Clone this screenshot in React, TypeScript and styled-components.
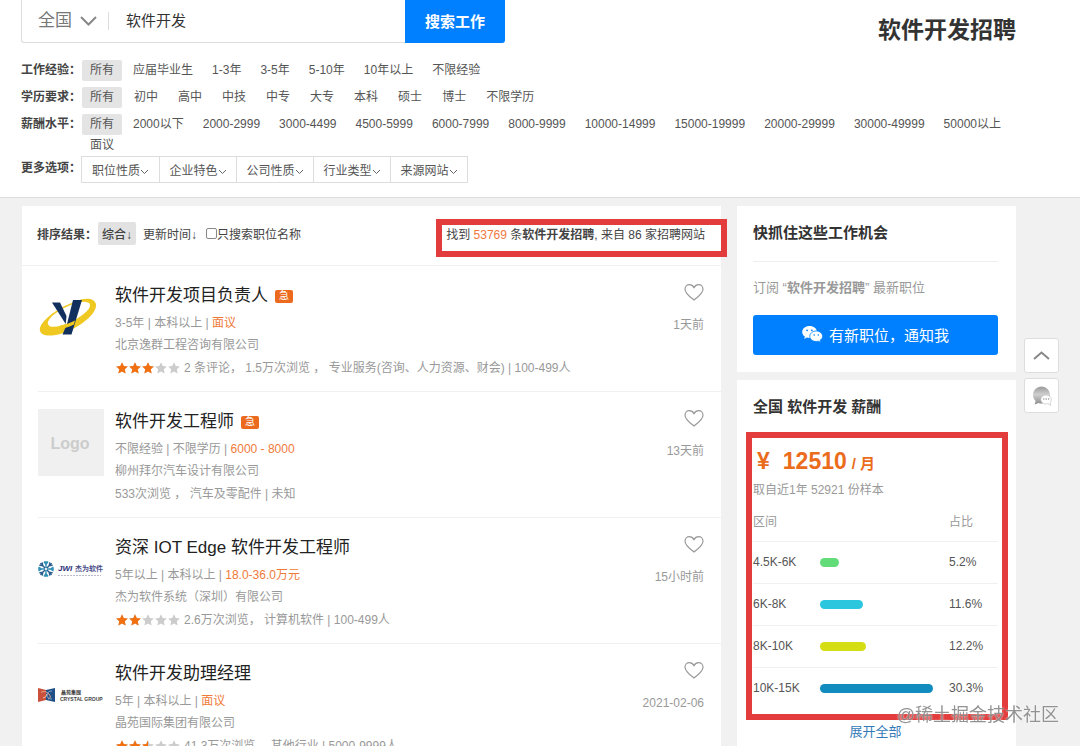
import React from "react";
import styled, { createGlobalStyle } from "styled-components";

const GlobalStyle = createGlobalStyle`
  * { box-sizing: border-box; }
  html, body { margin: 0; background: #f1f1f1; }
  body, button, input, select {
    font-family: "Liberation Sans", "Noto Sans CJK SC", sans-serif;
  }
  body { font-size: 12px; color: #444; }
  h1, h2, h3, p, ul { margin: 0; padding: 0; }
  ul { list-style: none; }
  a { color: inherit; text-decoration: none; }
  button { border: 0; padding: 0; cursor: pointer; }
`;

const Page = styled.div`
  height: 100vh;
  overflow: hidden auto;
  scrollbar-width: none;
`;

const Header = styled.header`
  background: #fff;
  border-bottom: 1px solid #dcdcdc;
  padding: 0 64px 14px 21px;
`;

const TopBar = styled.div`
  display: flex;
  justify-content: space-between;
  align-items: flex-start;
  height: 60px;
`;

const SearchForm = styled.form`
  display: flex;
  width: 484px;
  height: 43px;
  border: 1px solid #ddd;
  border-width: 0 0 1px 1px;
  border-radius: 0 0 3px 3px;
`;

const CityPicker = styled.label`
  position: relative;
  display: flex;
  align-items: center;
  width: 87px;
  padding-left: 16px;
  padding-bottom: 1px;

  &::after {
    content: "";
    position: absolute;
    right: 0;
    top: 12px;
    height: 18px;
    border-right: 1px solid #ddd;
  }
  svg { position: absolute; left: 58px; top: 16px; pointer-events: none; }
`;

const CitySelect = styled.select`
  appearance: none;
  border: 0;
  padding: 0;
  background: none;
  width: 64px;
  height: 40px;
  font-size: 17px;
  color: #777;
`;

const SearchInput = styled.input`
  flex: 1;
  min-width: 0;
  border: 0;
  background: none;
  padding: 0 0 3px 17px;
  font-size: 15px;
  color: #333;
  outline: none;
`;

const SearchButton = styled.button`
  width: 100px;
  height: 43px;
  padding-bottom: 3px;
  background: #0080ff;
  border-radius: 0 0 3px 0;
  color: #fff;
  font-size: 15px;
  font-weight: 700;
`;

const PageTitle = styled.h1`
  padding-top: 13px;
  font-size: 23px;
  line-height: 34px;
  color: #333;
`;

const FilterRow = styled.div<{ $gap: number }>`
  display: flex;
  margin-bottom: ${(p) => p.$gap}px;
`;

const FilterLabel = styled.span<{ $tall?: boolean }>`
  flex: none;
  width: 61px;
  font-weight: 700;
  line-height: ${(p) => (p.$tall ? 25 : 21)}px;
  color: #444;
`;

const Options = styled.ul<{ $gap: number }>`
  display: flex;
  flex-wrap: wrap;
  column-gap: ${(p) => p.$gap}px;
`;

const Option = styled.a<{ $on?: boolean }>`
  display: block;
  padding: 0 8px;
  line-height: 21px;
  border-radius: 2px;
  background: ${(p) => (p.$on ? "#e4e4e4" : "transparent")};
  color: #555;
`;

const MoreGroup = styled.div`
  display: flex;
  margin-left: -1px;
  border: 1px solid #ddd;
`;

const MoreButton = styled.button`
  display: flex;
  align-items: center;
  justify-content: center;
  width: 77px;
  height: 25px;
  padding-bottom: 1px;
  background: #fff;
  font-size: 12px;
  color: #555;

  & + & { border-left: 1px solid #ddd; }
  svg { margin-top: 6px; }
`;

const Body = styled.div`
  display: grid;
  grid-template-columns: minmax(0, 1fr) 279px;
  gap: 16px;
  padding: 8px 64px 0 22px;
  align-items: start;
`;

const Results = styled.main`
  background: #fff;
`;

const SortBar = styled.div`
  position: relative;
  display: flex;
  align-items: center;
  height: 60px;
  padding: 0 16px 4px 15px;
  border-bottom: 1px solid #f0f0f0;
`;

const SortLabel = styled.span`
  width: 61px;
  font-weight: 700;
`;

const SortButton = styled.button<{ $on?: boolean }>`
  height: 23px;
  padding: 0 4px;
  margin-right: 3px;
  border-radius: 2px;
  background: ${(p) => (p.$on ? "#e2e2e2" : "transparent")};
  font-size: 12px;
  font-weight: ${(p) => (p.$on ? 500 : 400)};
  color: #444;
`;

const TitleOnly = styled.label`
  display: flex;
  align-items: center;
  margin-left: 2px;

  input {
    appearance: none;
    width: 11px;
    height: 11px;
    margin: 0;
    border: 1px solid #888;
    border-radius: 2px;
    background: #fff;
  }
`;

const Summary = styled.p`
  margin-left: auto;
  em { font-style: normal; color: #f07840; }
`;

const SummaryMark = styled.div`
  position: absolute;
  inset: 13px -6px 8px auto;
  width: 291px;
  border: 6px solid #e23c3c;
  pointer-events: none;
`;

const Job = styled.article`
  display: grid;
  grid-template-columns: 77px minmax(0, 1fr) auto;
  height: 126px;
  margin-left: 16px;
  padding: 17px 17px 0 0;
  border-bottom: 1px solid #f0f0f0;
`;

const Logo = styled.div`
  width: 66px;
  height: 67px;
  svg { display: block; overflow: visible; }
`;

const JobTitle = styled.h2`
  display: flex;
  align-items: center;
  gap: 7px;
  margin-bottom: 3px;
  font-size: 17px;
  font-weight: 400;
  line-height: 26px;
  color: #222;
`;

const Urgent = styled.span`
  width: 18px;
  height: 13px;
  border-radius: 2px;
  background: #ec6a1e;
  color: #fff;
  font-size: 10px;
  line-height: 12px;
  text-align: center;
`;

const Meta = styled.p`
  display: flex;
  align-items: center;
  line-height: 22px;
  white-space: pre;
  color: #999;
  strong { font-weight: 400; color: #f07a3a; }
`;

const Stats = styled(Meta)`
  line-height: 24px;
  gap: 4px;
`;

const Side = styled.div`
  display: flex;
  flex-direction: column;
  align-items: flex-end;
  color: #999;
  line-height: 22px;
`;

const HeartButton = styled.button`
  width: 20px;
  height: 20px;
  margin-bottom: 11px;
  background: none;
  svg { display: block; }
`;

const Sidebar = styled.aside`
  display: grid;
  gap: 8px;
`;

const Card = styled.section`
  position: relative;
  background: #fff;
  padding: 0 18px 17px 16px;
`;

const CardTitle = styled.h2`
  font-size: 15px;
  line-height: 22px;
  padding: 16px 0 17px;
  color: #333;
`;

const Subscribe = styled.p`
  border-top: 1px solid #eee;
  padding: 16px 0;
  font-size: 13px;
  line-height: 20px;
  color: #999;
`;

const NotifyButton = styled.button`
  display: flex;
  align-items: center;
  justify-content: center;
  gap: 6px;
  width: 100%;
  height: 40px;
  margin-top: 1px;
  padding-bottom: 2px;
  border-radius: 3px;
  background: #0080ff;
  color: #fff;
  font-size: 15px;
`;

const Price = styled.p`
  display: flex;
  align-items: baseline;
  padding-left: 4px;
  margin-top: 10px;
  font-size: 23px;
  font-weight: 700;
  line-height: 32px;
  color: #ea6c1c;
  span { margin-right: 13px; }
  small { margin-left: 5px; font-size: 15px; }
`;

const Sample = styled.p`
  line-height: 20px;
  color: #999;
`;

const SalaryTable = styled.table`
  width: 100%;
  border-collapse: collapse;
  table-layout: fixed;
  text-align: left;
  color: #555;

  th, td {
    height: 42px;
    padding: 0;
    font-weight: 400;
  }
  thead th { height: 41px; color: #999; }
  tbody tr { border-top: 1px solid #f0f0f0; }
  td:nth-child(2) { padding-right: 16px; }
`;

const RangeCol = styled.col` width: 67px; `;
const BarCol = styled.col` width: 129px; `;

const Bar = styled.div<{ $color: string }>`
  height: 9px;
  border-radius: 5px;
  background: ${(p) => p.$color};
`;

const SalaryMark = styled.div`
  position: absolute;
  inset: 52px 8px 39px 9px;
  border: 6px solid #e23c3c;
  pointer-events: none;
`;

const ExpandLink = styled.a`
  display: block;
  padding-top: 13px;
  text-align: center;
  font-size: 13px;
  line-height: 20px;
  color: #337ab7;
`;

const FloatTools = styled.div`
  position: fixed;
  right: 21px;
  top: 338px;
  display: grid;
  gap: 5px;
`;

const ToolButton = styled.button`
  display: grid;
  place-items: center;
  width: 35px;
  height: 35px;
  border: 1px solid #ddd;
  border-radius: 3px;
  background: #fff;
`;

const Watermark = styled.div`
  position: fixed;
  right: 21px;
  bottom: 18px;
  font-size: 18px;
  line-height: 26px;
  color: rgba(120, 120, 120, 0.8);
  text-shadow: 0 0 2px #fff;
`;

function Chevron({ width, height, color, up, weight = 2 }: { width: number; height: number; color: string; up?: boolean; weight?: number }) {
  return (
    <svg width={width} height={height} viewBox={`0 0 ${width} ${height}`} fill="none" stroke={color} strokeWidth={weight} aria-hidden="true">
      <path d={up ? `M1 ${height - 1}L${width / 2} 1.5L${width - 1} ${height - 1}` : `M1 1L${width / 2} ${height - 1.5}L${width - 1} 1`} />
    </svg>
  );
}

const STAR = "M6 .3l1.75 3.75 4.1.5-3.03 2.8.8 4.05L6 9.4l-3.62 2 .8-4.05L.15 4.55l4.1-.5z";

function Stars({ id, score }: { id: string; score: number }) {
  return (
    <svg width="65" height="12" viewBox="0 0 65 12" role="img" aria-label={`${score} 星`}>
      {[0, 1, 2, 3, 4].map((i) => {
        const part = Math.max(0, Math.min(1, score - i));
        return (
          <g key={i} transform={`translate(${i * 13 + 1} 0)`}>
            <path d={STAR} fill="#ccc" />
            <clipPath id={`${id}-${i}`}>
              <rect width={12 * part} height="12" />
            </clipPath>
            <path d={STAR} fill="#f2700f" clipPath={`url(#${id}-${i})`} />
          </g>
        );
      })}
    </svg>
  );
}

function Heart() {
  return (
    <svg width="20" height="20" viewBox="0 0 20 20" fill="none" stroke="#999" strokeWidth="1.2" aria-hidden="true">
      <path d="M10 17C6.500 14.200 1 10.400 1 6.200 1 3.400 3 1.600 5.400 1.600c2 0 3.600 1.200 4.600 3 1-1.800 2.600-3 4.600-3C17 1.600 19 3.400 19 6.200c0 4.200-5.500 8-9 10.800z" />
    </svg>
  );
}

function WechatIcon() {
  return (
    <svg width="21" height="18" viewBox="0 0 21 18" aria-hidden="true">
      <path d="M7.500 1C3.400 1 .2 3.600.2 7c0 1.900 1 3.500 2.700 4.600L2.200 14l2.600-1.400c.9.300 1.800.4 2.700.4C11.600 13 15 10.400 15 7S11.600 1 7.500 1z" fill="#fff" />
      <circle cx="5.100" cy="5.300" r=".9" fill="#0080ff" />
      <circle cx="9.900" cy="5.300" r=".9" fill="#0080ff" />
      <path d="M14.200 6c-3.600 0-6.400 2.400-6.400 5.300s2.800 5.200 6.400 5.200c.7 0 1.500-.1 2.200-.3l2.200 1.300-.6-2.100c1.600-1 2.600-2.400 2.600-4.100C20.600 8.400 17.800 6 14.200 6z" fill="#fff" stroke="#0080ff" strokeWidth=".8" />
      <circle cx="12.200" cy="10" r=".8" fill="#0080ff" />
      <circle cx="16.300" cy="10" r=".8" fill="#0080ff" />
    </svg>
  );
}

function ChatIcon() {
  return (
    <svg width="20" height="20" viewBox="0 0 20 20" aria-hidden="true">
      <defs>
        <linearGradient id="chat" x1="0" y1="0" x2="0" y2="1">
          <stop offset="0" stopColor="#9a9a9a" />
          <stop offset=".45" stopColor="#cfcfcf" />
          <stop offset="1" stopColor="#8a8a8a" />
        </linearGradient>
      </defs>
      <path d="M9.500.5C4.800.5 1 4.300 1 9c0 2.400 1 4.500 2.600 6L2.700 18.500l3.800-1.600c.9.400 1.900.6 3 .6 4.700 0 8.500-3.800 8.500-8.500S14.200.5 9.500.5z" fill="url(#chat)" />
      <path d="M14 9c-3 0-5.200 1.900-5.200 4.500S11 18 14 18c.7 0 1.400-.1 2-.3l2.700 1.600-.5-2.800c.7-.8 1.100-1.800 1.100-3C19.300 10.900 17 9 14 9z" fill="#fff" stroke="#bbb" strokeWidth=".6" />
      <g fill="#999">
        <circle cx="11.800" cy="13" r=".8" />
        <circle cx="14.200" cy="13" r=".8" />
        <circle cx="16.600" cy="13" r=".8" />
      </g>
    </svg>
  );
}

function OrbitLogo() {
  return (
    <svg width="66" height="67" viewBox="0 0 66 67" aria-hidden="true">
      <path
        fillRule="evenodd"
        fill="#efc922"
        d="M36 19C47 14 57 15 58 21.500c.8 7.500-10 18-25 25.500C19 53.500 4 55 2 48 0 40 17 26 36 19zM34 21.500C20 27 9 35.500 10 41c1 4.500 11 3.500 22-1.500C43 34 53 26.500 52 21.500c-1-3.800-10-3.300-18 0z"
      />
      <path d="M14 19.500h8l6.500 13.500-.8 8z" fill="#12305e" />
      <path d="M35 17h9L33.500 51.500H24.500L29 41z" fill="#12305e" />
      <path d="M22 42.500c5-.8 10-2.500 15-5l-1 4c-5 2.500-10 4-14.500 4.500z" fill="#efc922" />
    </svg>
  );
}

function PlaceholderLogo() {
  return (
    <svg width="66" height="67" viewBox="0 0 66 67" role="img" aria-label="Logo">
      <rect width="66" height="67" fill="#f0f0f0" />
      <text x="32" y="40" textAnchor="middle" fontSize="16" fontWeight="700" fill="#ccc">Logo</text>
    </svg>
  );
}

function JwiLogo() {
  return (
    <svg width="66" height="67" viewBox="0 0 66 67" role="img" aria-label="JWI 杰为软件">
      <g transform="translate(8 34)" strokeWidth="1.400" fill="none">
        {[0, 45, 90, 135, 180, 225, 270, 315].map((a) => (
          <path key={a} transform={`rotate(${a})`} d="M0-1V-8M-2-7.500L0-4.500 2-7.500" stroke={a % 90 ? "#2b5c8c" : "#2f8fb5"} />
        ))}
      </g>
      <text x="20" y="36" fontSize="8" fontWeight="700" fontStyle="italic" fill="#2b2f7a">JWI</text>
      <text x="37" y="36" fontSize="7" fontWeight="700" fill="#4a4f8a">杰为软件</text>
      <path d="M20 40.500h43" stroke="#bbc" strokeDasharray="2 1" />
    </svg>
  );
}

function CrystalLogo() {
  return (
    <svg width="66" height="67" viewBox="0 0 66 67" role="img" aria-label="晶苑集团 CRYSTAL GROUP">
      <path d="M0 27l8 2v10l-8 2z" fill="#c9503a" />
      <path d="M8 29l9-2v14l-9-2z" fill="#1f4f86" />
      <path d="M3 31q5-2 8 2t-1 5" fill="none" stroke="#e9a48a" />
      <path d="M14 30q-5 0-5 4t5 4" fill="none" stroke="#7fa6c8" />
      <path d="M5 37q3 0 4-4" fill="none" stroke="#f0c0b0" />
      <text x="23" y="33" fontSize="5" fontWeight="700" fill="#333">晶苑集團</text>
      <text x="22" y="40" fontSize="5" fontWeight="700" fill="#444">CRYSTAL GROUP</text>
    </svg>
  );
}

const filters = [
  { label: "工作经验：", gap: 3, items: ["所有", "应届毕业生", "1-3年", "3-5年", "5-10年", "10年以上", "不限经验"] },
  { label: "学历要求：", gap: 4, items: ["所有", "初中", "高中", "中技", "中专", "大专", "本科", "硕士", "博士", "不限学历"] },
  {
    label: "薪酬水平：",
    gap: 3,
    items: ["所有", "2000以下", "2000-2999", "3000-4499", "4500-5999", "6000-7999", "8000-9999", "10000-14999", "15000-19999", "20000-29999", "30000-49999", "50000以上", "面议"],
  },
];

const moreOptions = ["职位性质", "企业特色", "公司性质", "行业类型", "来源网站"];

const jobs = [
  { id: "a", title: "软件开发项目负责人", urgent: true, need: "3-5年 | 本科以上 | ", pay: "面议", company: "北京逸群工程咨询有限公司", score: 3, stats: "2 条评论， 1.5万次浏览 ， 专业服务(咨询、人力资源、财会) | 100-499人", date: "1天前", logo: <OrbitLogo /> },
  { id: "b", title: "软件开发工程师", urgent: true, need: "不限经验 | 不限学历 | ", pay: "6000 - 8000", company: "柳州拜尔汽车设计有限公司", score: 0, stats: "533次浏览 ， 汽车及零配件 | 未知", date: "13天前", logo: <PlaceholderLogo /> },
  { id: "c", title: "资深 IOT Edge 软件开发工程师", urgent: false, need: "5年以上 | 本科以上 | ", pay: "18.0-36.0万元", company: "杰为软件系统（深圳）有限公司", score: 2, stats: "2.6万次浏览， 计算机软件 | 100-499人", date: "15小时前", logo: <JwiLogo /> },
  { id: "d", title: "软件开发助理经理", urgent: false, need: "5年 | 本科以上 | ", pay: "面议", company: "晶苑国际集团有限公司", score: 2.5, stats: "41.3万次浏览， 其他行业 | 5000-9999人", date: "2021-02-06", logo: <CrystalLogo /> },
];

const salaries = [
  { range: "4.5K-6K", share: 5.2, color: "#62dc78" },
  { range: "6K-8K", share: 11.6, color: "#2cc6de" },
  { range: "8K-10K", share: 12.2, color: "#d4de12" },
  { range: "10K-15K", share: 30.3, color: "#128cbe" },
];
const topShare = Math.max(...salaries.map((s) => s.share));

export default function App() {
  return (
    <Page>
      <GlobalStyle />
      <Header>
        <TopBar>
          <SearchForm onSubmit={(e) => e.preventDefault()}>
            <CityPicker>
              <CitySelect aria-label="城市">
                <option>全国</option>
              </CitySelect>
              <Chevron width={17} height={10} color="#888" />
            </CityPicker>
            <SearchInput aria-label="职位关键词" defaultValue="软件开发" />
            <SearchButton type="submit">搜索工作</SearchButton>
          </SearchForm>
          <PageTitle>软件开发招聘</PageTitle>
        </TopBar>
        {filters.map((row, i) => (
          <FilterRow key={row.label} $gap={i === filters.length - 1 ? 0 : 6}>
            <FilterLabel>{row.label}</FilterLabel>
            <Options $gap={row.gap}>
              {row.items.map((item, n) => (
                <li key={item}>
                  <Option href="#" $on={n === 0}>{item}</Option>
                </li>
              ))}
            </Options>
          </FilterRow>
        ))}
        <FilterRow $gap={0}>
          <FilterLabel $tall>更多选项：</FilterLabel>
          <MoreGroup>
            {moreOptions.map((name) => (
              <MoreButton key={name} type="button">
                {name}
                <Chevron width={9} height={6} color="#666" weight={1} />
              </MoreButton>
            ))}
          </MoreGroup>
        </FilterRow>
      </Header>

      <Body>
        <Results>
          <SortBar>
            <SortLabel>排序结果：</SortLabel>
            <SortButton type="button" $on>综合↓</SortButton>
            <SortButton type="button">更新时间↓</SortButton>
            <TitleOnly>
              <input type="checkbox" />
              只搜索职位名称
            </TitleOnly>
            <Summary>
              找到 <em>53769</em> 条<b>软件开发招聘</b>, 来自 86 家招聘网站
            </Summary>
            <SummaryMark />
          </SortBar>
          {jobs.map((job) => (
            <Job key={job.id}>
              <Logo>{job.logo}</Logo>
              <div>
                <JobTitle>
                  <a href="#">{job.title}</a>
                  {job.urgent && <Urgent>急</Urgent>}
                </JobTitle>
                <Meta>{job.need}<strong>{job.pay}</strong></Meta>
                <Meta>{job.company}</Meta>
                <Stats>
                  {job.score > 0 && <Stars id={job.id} score={job.score} />}
                  {job.stats}
                </Stats>
              </div>
              <Side>
                <HeartButton type="button" aria-label="收藏"><Heart /></HeartButton>
                <time>{job.date}</time>
              </Side>
            </Job>
          ))}
        </Results>

        <Sidebar>
          <Card>
            <CardTitle>快抓住这些工作机会</CardTitle>
            <Subscribe>订阅 “<b>软件开发招聘</b>” 最新职位</Subscribe>
            <NotifyButton type="button">
              <WechatIcon />
              有新职位，通知我
            </NotifyButton>
          </Card>
          <Card>
            <CardTitle>全国 软件开发 薪酬</CardTitle>
            <Price>
              <span>¥</span>
              12510
              <small>/ 月</small>
            </Price>
            <Sample>取自近1年 52921 份样本</Sample>
            <SalaryTable>
              <colgroup>
                <RangeCol />
                <BarCol />
                <col />
              </colgroup>
              <thead>
                <tr>
                  <th scope="col" colSpan={2}>区间</th>
                  <th scope="col">占比</th>
                </tr>
              </thead>
              <tbody>
                {salaries.map((s) => (
                  <tr key={s.range}>
                    <td>{s.range}</td>
                    <td><Bar $color={s.color} style={{ width: `${(s.share / topShare) * 100}%` }} /></td>
                    <td>{s.share}%</td>
                  </tr>
                ))}
              </tbody>
            </SalaryTable>
            <ExpandLink href="#">展开全部</ExpandLink>
            <SalaryMark />
          </Card>
        </Sidebar>
      </Body>

      <FloatTools>
        <ToolButton type="button" aria-label="回到顶部">
          <Chevron width={17} height={9} color="#888" up />
        </ToolButton>
        <ToolButton type="button" aria-label="在线咨询"><ChatIcon /></ToolButton>
      </FloatTools>
      <Watermark>@稀土掘金技术社区</Watermark>
    </Page>
  );
}
